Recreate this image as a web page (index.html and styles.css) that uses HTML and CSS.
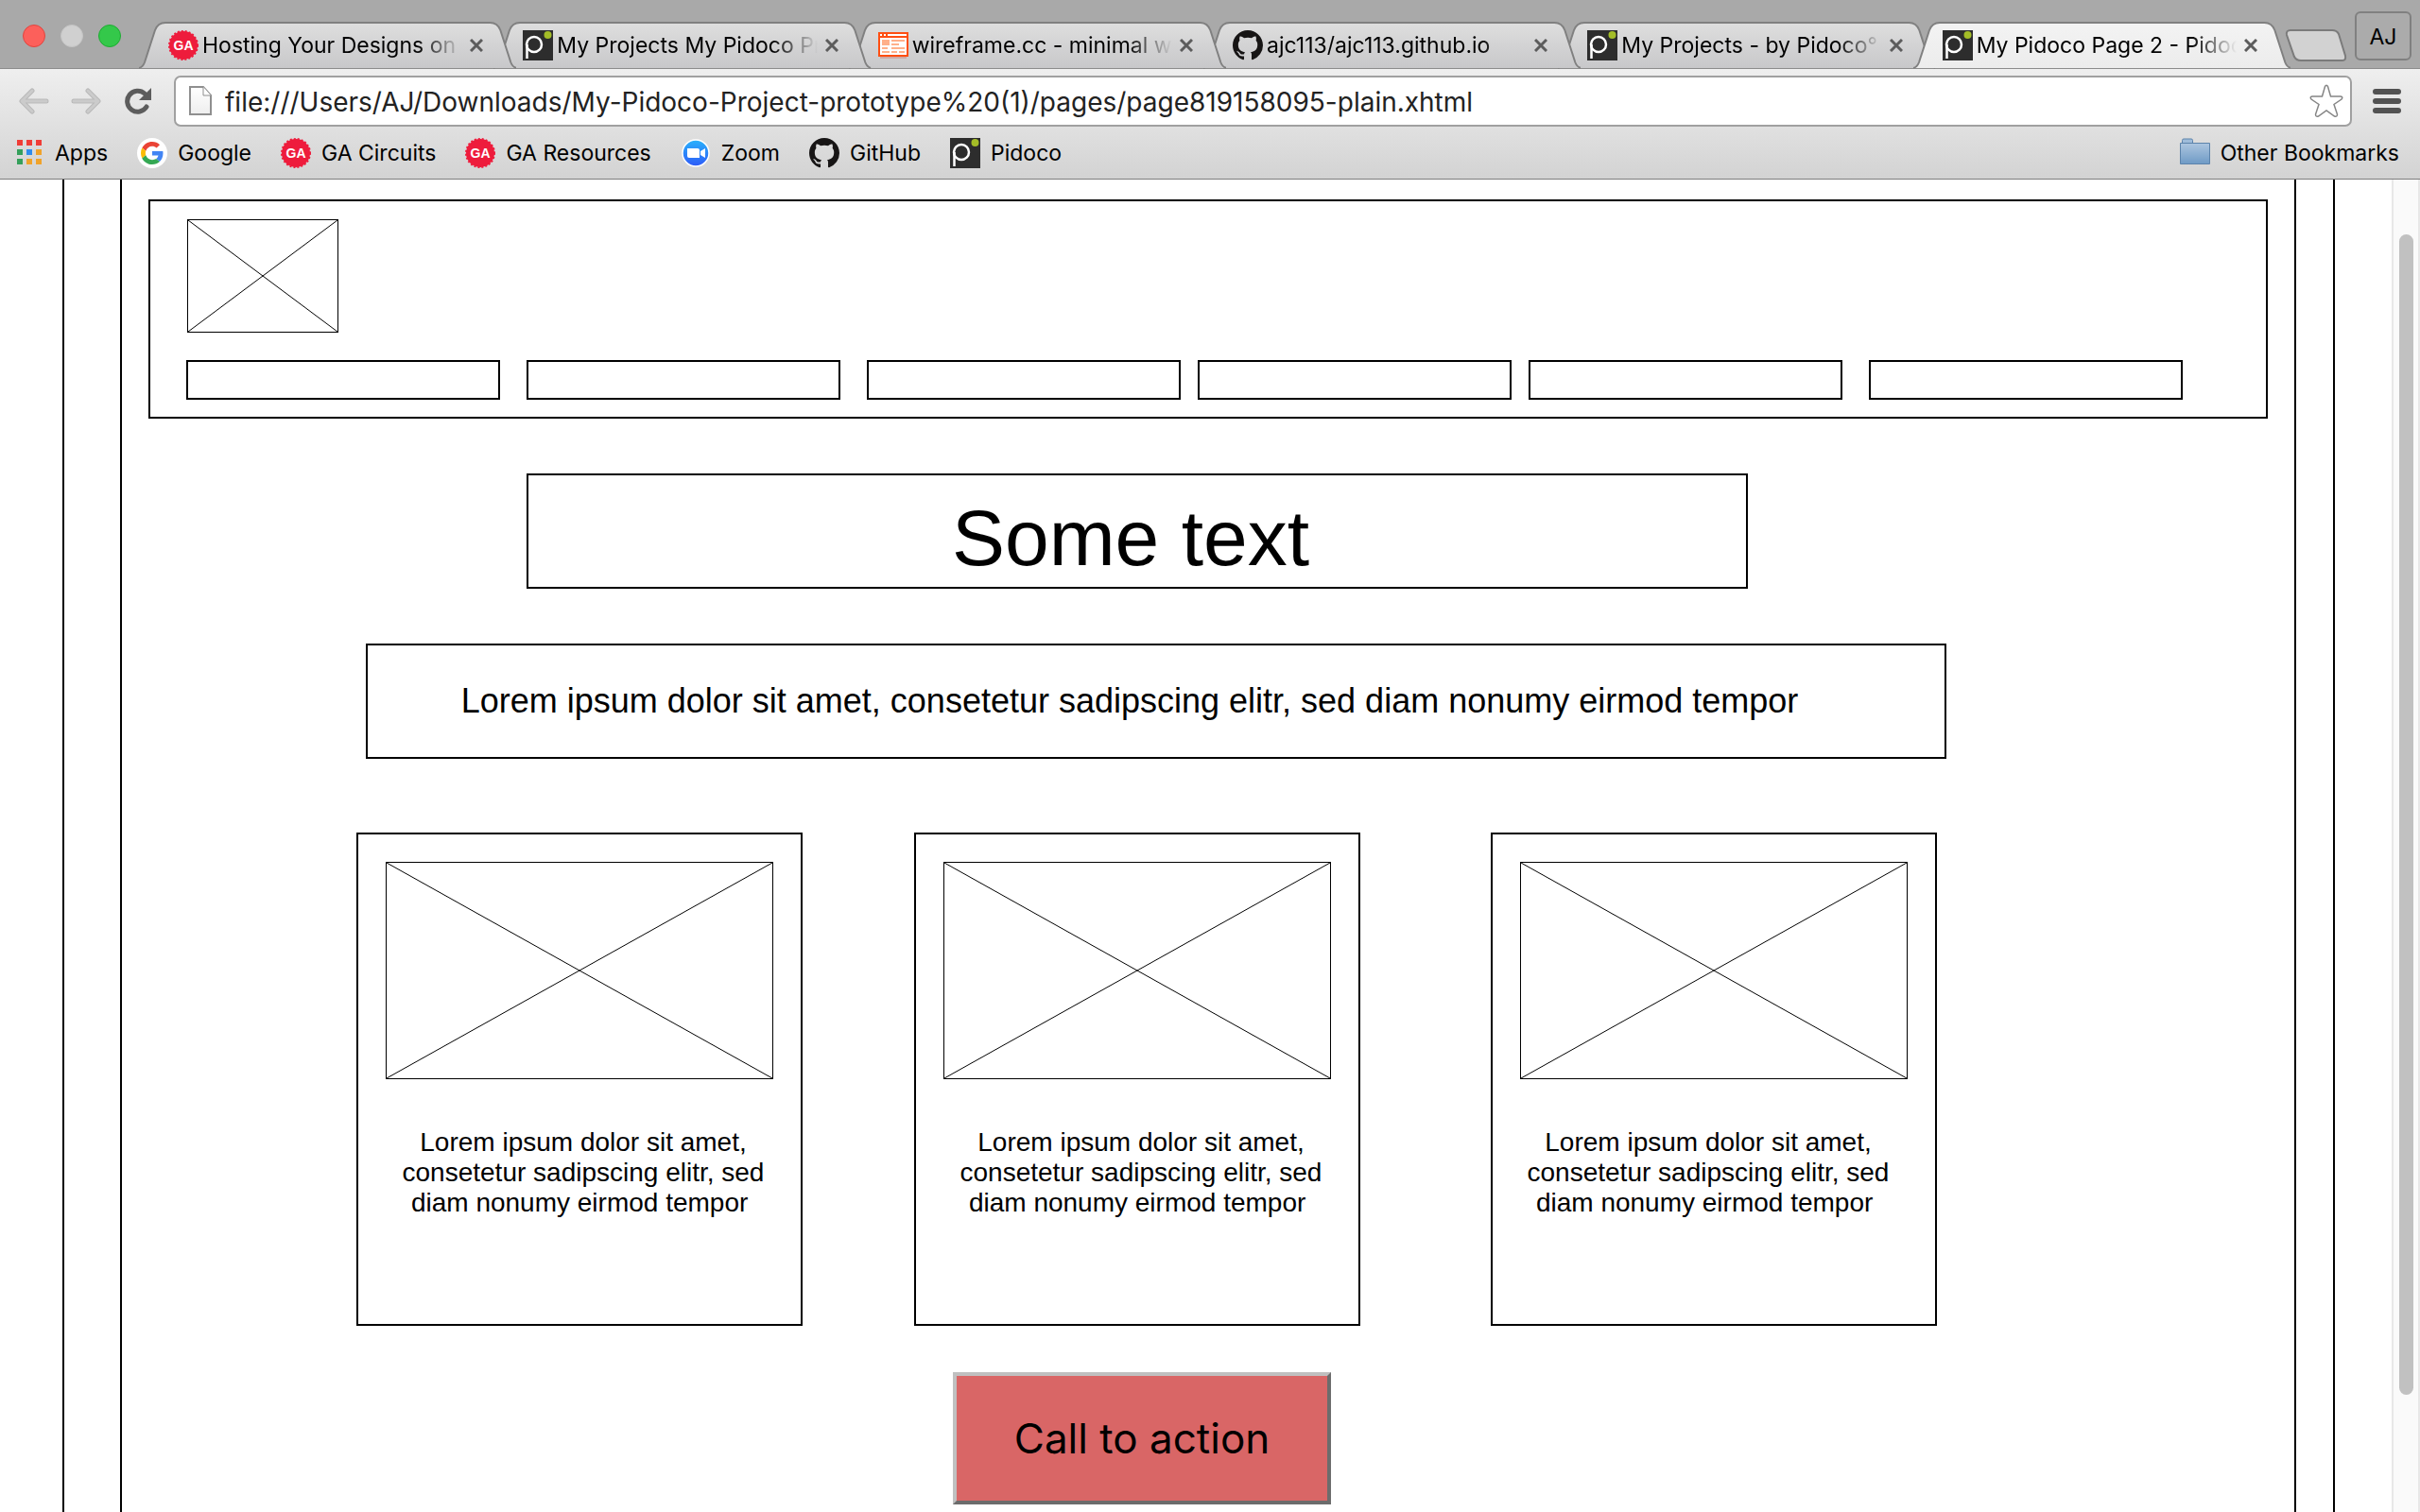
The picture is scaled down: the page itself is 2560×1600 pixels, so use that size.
FILE: index.html
```html
<!DOCTYPE html>
<html lang="en">
<head>
<meta charset="utf-8">
<meta name="viewport" content="width=device-width, initial-scale=1">
<title>My Pidoco Page 2 - Pidoco</title>
<link rel="stylesheet" href="styles.css">
</head>
<body>
<svg class="sprite" aria-hidden="true">
  <defs>
    <linearGradient id="tab-fill" x1="0" y1="0" x2="0" y2="1"><stop offset="0" stop-color="#dedede"/><stop offset="1" stop-color="#c8c8ca"/></linearGradient>
    <linearGradient id="tab-on" x1="0" y1="0" x2="0" y2="1"><stop offset="0" stop-color="#f3f3f3"/><stop offset="1" stop-color="#ececec"/></linearGradient>
    <linearGradient id="zoom-fill" x1="0" y1="0" x2="0" y2="1"><stop offset="0" stop-color="#29b2fb"/><stop offset="1" stop-color="#2e5bf8"/></linearGradient>
    <linearGradient id="folder-fill" x1="0" y1="0" x2="0" y2="1"><stop offset="0" stop-color="#adc6e0"/><stop offset="1" stop-color="#6e9ac5"/></linearGradient>
    <linearGradient id="page-fill" x1="0" y1="0" x2="0" y2="1"><stop offset="0" stop-color="#fff"/><stop offset="1" stop-color="#eee"/></linearGradient>
  </defs>
  <symbol id="tab" viewBox="0 0 400 50" preserveAspectRatio="none"><path d="M0 49Q4 48 6 43L17 9Q20 1 28 1H372Q380 1 383 9L394 43Q396 48 400 49"/></symbol>
  <symbol id="ga" viewBox="0 0 32 32"><circle cx="16" cy="16" r="15" fill="#ee1c3c"/><circle cx="16" cy="16" r="15" fill="none" stroke="#ee1c3c" stroke-width="2" stroke-dasharray="2 2"/></symbol>
  <symbol id="pidoco" viewBox="0 0 32 32"><path fill="#2d2d2d" d="M0 0h32v32H0z"/><circle cx="12" cy="15" r="8" fill="none" stroke="#fff" stroke-width="2.500"/><path d="M4.500 30V15" fill="none" stroke="#fff" stroke-width="2.500"/><circle cx="26.500" cy="5" r="4" fill="#a4bd27"/></symbol>
  <symbol id="github" viewBox="0 0 16 16"><path fill="#171515" d="M8 0C3.580 0 0 3.580 0 8c0 3.540 2.290 6.530 5.470 7.590.4.070.55-.17.55-.38 0-.19-.01-.82-.01-1.490-2.010.37-2.530-.49-2.690-.94-.09-.23-.48-.94-.82-1.130-.28-.15-.68-.52-.01-.53.63-.01 1.080.58 1.230.82.72 1.210 1.870.87 2.330.66.07-.52.28-.87.51-1.070-1.780-.2-3.640-.89-3.640-3.950 0-.87.31-1.590.82-2.150-.08-.2-.36-1.020.08-2.120 0 0 .67-.21 2.200.82.64-.18 1.320-.27 2-.27s1.360.09 2 .27c1.530-1.040 2.200-.82 2.200-.82.44 1.100.16 1.920.08 2.120.51.56.82 1.270.82 2.150 0 3.070-1.870 3.750-3.650 3.950.29.25.54.73.54 1.480 0 1.070-.01 1.930-.01 2.200 0 .21.15.46.55.38A8.010 8.010 0 0 0 16 8c0-4.420-3.580-8-8-8z"/></symbol>
  <symbol id="wire" viewBox="0 0 32 32"><path fill="#cfa9a4" d="M2 28h28v2H2z"/><path fill="#ff4f12" d="M0 2h32v26H0z"/><path fill="#fff" d="M2 8h28v18H2zM2 4h2v2H2zM6 4h2v2H6zM10 4h20v2H10z"/><path fill="#ffb08a" d="M4 10h8v6H4zM14 10h14v2H14zM14 14h8v2h-8zM4 18h6v2H4zM14 18h14v2H14zM4 22h8v2H4zM14 22h6v2h-6zM22 22h6v2h-6z"/></symbol>
  <symbol id="close" viewBox="0 0 14 14"><path d="M1 1l12 12M13 1L1 13" stroke="#5c5c5c" stroke-width="3"/></symbol>
</svg>

<header class="chrome">
  <div class="strip">
    <div class="lights">
      <button class="light red" aria-label="Close window"></button>
      <button class="light gray" aria-label="Minimize window"></button>
      <button class="light green" aria-label="Zoom window"></button>
    </div>
    <nav class="tabs" aria-label="Tabs">
      <div class="tab"><svg class="shape"><use href="#tab"/></svg><svg class="icon" viewBox="0 0 32 32"><use href="#ga"/><text x="16" y="21" text-anchor="middle" class="ga-text">GA</text></svg><span class="label">Hosting Your Designs on |</span><button class="close" aria-label="Close tab"><svg><use href="#close"/></svg></button></div>
      <div class="tab"><svg class="shape"><use href="#tab"/></svg><svg class="icon"><use href="#pidoco"/></svg><span class="label">My Projects My Pidoco Pro</span><button class="close" aria-label="Close tab"><svg><use href="#close"/></svg></button></div>
      <div class="tab"><svg class="shape"><use href="#tab"/></svg><svg class="icon"><use href="#wire"/></svg><span class="label">wireframe.cc - minimal wir</span><button class="close" aria-label="Close tab"><svg><use href="#close"/></svg></button></div>
      <div class="tab"><svg class="shape"><use href="#tab"/></svg><svg class="icon"><use href="#github"/></svg><span class="label">ajc113/ajc113.github.io</span><button class="close" aria-label="Close tab"><svg><use href="#close"/></svg></button></div>
      <div class="tab"><svg class="shape"><use href="#tab"/></svg><svg class="icon"><use href="#pidoco"/></svg><span class="label">My Projects - by Pidoco° P</span><button class="close" aria-label="Close tab"><svg><use href="#close"/></svg></button></div>
      <div class="tab on"><svg class="shape"><use href="#tab"/></svg><svg class="icon"><use href="#pidoco"/></svg><span class="label">My Pidoco Page 2 - Pidoc</span><button class="close" aria-label="Close tab"><svg><use href="#close"/></svg></button></div>
    </nav>
    <button class="new-tab" aria-label="New tab"><svg viewBox="0 0 66 34"><path d="M6 1H50Q55 1 57 5L64 28Q65 33 61 33H17Q12 33 10 29L2 6Q1 1 6 1Z" fill="#d2d2d2" stroke="#7b7b7b" stroke-width="2"/></svg></button>
    <button class="profile">AJ</button>
  </div>

  <div class="toolbar">
    <button class="tool" aria-label="Back"><svg viewBox="0 0 32 28"><path d="M14 3L3 14L14 25M4 14H29" fill="none" stroke="#b9b9b9" stroke-width="5" stroke-linecap="round" stroke-linejoin="round"/><path d="M14 3L3 14L14 25M4 14H29" fill="none" stroke="#cbcbcb" stroke-width="3" stroke-linecap="round" stroke-linejoin="round"/></svg></button>
    <button class="tool" aria-label="Forward"><svg viewBox="0 0 32 28"><path d="M18 3L29 14L18 25M28 14H3" fill="none" stroke="#b9b9b9" stroke-width="5" stroke-linecap="round" stroke-linejoin="round"/><path d="M18 3L29 14L18 25M28 14H3" fill="none" stroke="#cbcbcb" stroke-width="3" stroke-linecap="round" stroke-linejoin="round"/></svg></button>
    <button class="tool reload" aria-label="Reload"><svg viewBox="0 0 32 28"><path d="M25 20A11 11 0 1 1 23 6" fill="none" stroke="#5c5c5c" stroke-width="5" stroke-linecap="round"/><path d="M30 0V13H17Z" fill="#5c5c5c"/></svg></button>
    <div class="address">
      <svg class="page-icon" viewBox="0 0 24 32"><path d="M1 1H15L23 10V30H1Z" fill="url(#page-fill)" stroke="#8f8f8f" stroke-width="2"/><path d="M15 1V10H23" fill="#fff" stroke="#8f8f8f" stroke-width="1"/></svg>
      <input class="url" type="text" aria-label="Address" value="file:///Users/AJ/Downloads/My-Pidoco-Project-prototype%20(1)/pages/page819158095-plain.xhtml">
      <button class="star" aria-label="Bookmark this page"><svg viewBox="0 0 36 36"><path d="M16.500 2.500Q18 0 19.500 2.500L22.500 13H33Q36 13.500 34 16L26 21.500L29.500 32Q29.500 35 26.500 34L18 28L9.500 34Q6.500 35 6.500 32L10 21.500L2 16Q0 13.500 3 13H13.500Z" fill="#fff" stroke="#858585" stroke-width="1.500"/></svg></button>
    </div>
    <button class="menu" aria-label="Menu"><svg viewBox="0 0 30 28"><path d="M3 4H27M3 14H27M3 24H27" stroke="#525252" stroke-width="6" stroke-linecap="round"/></svg></button>
  </div>

  <nav class="bookmarks" aria-label="Bookmarks">
    <a class="mark" href="#"><svg class="icon" viewBox="0 0 32 32"><path fill="#f03d37" d="M3 2h6v6H3zM13 2h6v6h-6zM23 2h6v6h-6z"/><path fill="#35a05b" d="M3 12h6v6H3zM3 22h6v6H3z"/><path fill="#2f8cee" d="M13 12h6v6h-6z"/><path fill="#f0a32b" d="M23 12h6v6h-6zM13 22h6v6h-6zM23 22h6v6h-6z"/></svg>Apps</a>
    <a class="mark" href="#"><svg class="icon" viewBox="0 0 32 32"><circle cx="16" cy="16" r="16" fill="#fff"/><g transform="translate(4 4) scale(.5)"><path fill="#ea4335" d="M24 9.500c3.540 0 6.710 1.220 9.210 3.600l6.850-6.850C35.900 2.380 30.470 0 24 0 14.620 0 6.510 5.380 2.560 13.220l7.980 6.190C12.430 13.720 17.740 9.500 24 9.500z"/><path fill="#4285f4" d="M46.980 24.550c0-1.570-.15-3.090-.38-4.550H24v9.020h12.940c-.58 2.960-2.260 5.480-4.780 7.180l7.730 6c4.510-4.180 7.090-10.360 7.090-17.650z"/><path fill="#fbbc05" d="M10.530 28.590c-.48-1.450-.76-2.990-.76-4.590s.27-3.140.76-4.590l-7.980-6.190C.92 16.460 0 20.120 0 24c0 3.880.92 7.540 2.560 10.780l7.970-6.190z"/><path fill="#34a853" d="M24 48c6.480 0 11.930-2.130 15.890-5.810l-7.730-6c-2.150 1.450-4.920 2.300-8.160 2.300-6.260 0-11.570-4.220-13.470-9.910l-7.980 6.190C6.510 42.620 14.620 48 24 48z"/></g></svg>Google</a>
    <a class="mark" href="#"><svg class="icon" viewBox="0 0 32 32"><use href="#ga"/><text x="16" y="21" text-anchor="middle" class="ga-text">GA</text></svg>GA Circuits</a>
    <a class="mark" href="#"><svg class="icon" viewBox="0 0 32 32"><use href="#ga"/><text x="16" y="21" text-anchor="middle" class="ga-text">GA</text></svg>GA Resources</a>
    <a class="mark" href="#"><svg class="icon" viewBox="0 0 32 32"><circle cx="16" cy="16" r="14" fill="url(#zoom-fill)" stroke="#fff" stroke-width="1.500"/><path fill="#fff" d="M7 11h11q2 0 2 2v8H9q-2 0-2-2zM21 14l5-3v10l-5-3z"/></svg>Zoom</a>
    <a class="mark" href="#"><svg class="icon"><use href="#github"/></svg>GitHub</a>
    <a class="mark" href="#"><svg class="icon"><use href="#pidoco"/></svg>Pidoco</a>
    <a class="mark other" href="#"><svg class="icon" viewBox="0 0 32 32"><path d="M2.500 6V2.500Q2.500 1 4 1H12Q13.500 1 13.500 2.500V6" fill="#9fbcda" stroke="#5c83ab"/><path d="M.5 5.500H31.500V27.500H.5Z" fill="url(#folder-fill)" stroke="#5c83ab"/></svg>Other Bookmarks</a>
  </nav>
</header>

<div class="viewport">
  <main class="outer">
    <div class="inner">
      <header class="site-head">
        <svg class="logo cross" role="img" aria-label="Logo"><line x1="0" y1="0" x2="100%" y2="100%"/><line x1="100%" y1="0" x2="0" y2="100%"/></svg>
        <nav class="site-nav" aria-label="Site">
          <a href="#" aria-label="Link 1"></a>
          <a href="#" aria-label="Link 2" class="wide"></a>
          <a href="#" aria-label="Link 3" class="wide"></a>
          <a href="#" aria-label="Link 4"></a>
          <a href="#" aria-label="Link 5"></a>
          <a href="#" aria-label="Link 6" class="wide"></a>
        </nav>
      </header>
      <h1 class="title">Some text</h1>
      <p class="lead">Lorem ipsum dolor sit amet, consetetur sadipscing elitr, sed diam nonumy eirmod tempor</p>
      <section class="cards">
        <article class="card"><svg class="photo cross" role="img" aria-label="Image"><line x1="0" y1="0" x2="100%" y2="100%"/><line x1="100%" y1="0" x2="0" y2="100%"/></svg><p>Lorem ipsum dolor sit amet, consetetur sadipscing elitr, sed diam nonumy eirmod tempor&nbsp;</p></article>
        <article class="card"><svg class="photo cross" role="img" aria-label="Image"><line x1="0" y1="0" x2="100%" y2="100%"/><line x1="100%" y1="0" x2="0" y2="100%"/></svg><p>Lorem ipsum dolor sit amet, consetetur sadipscing elitr, sed diam nonumy eirmod tempor&nbsp;</p></article>
        <article class="card last"><svg class="photo cross" role="img" aria-label="Image"><line x1="0" y1="0" x2="100%" y2="100%"/><line x1="100%" y1="0" x2="0" y2="100%"/></svg><p>Lorem ipsum dolor sit amet, consetetur sadipscing elitr, sed diam nonumy eirmod tempor&nbsp;</p></article>
      </section>
      <button class="cta">Call to action</button>
    </div>
  </main>
  <div class="scrollbar"><div class="thumb"></div></div>
</div>
</body>
</html>
```
FILE: styles.css
```css
* { box-sizing: border-box; }

html, body { margin: 0; height: 100%; }

body {
  display: flex;
  flex-direction: column;
  overflow: hidden;
  background: #fff;
  color: #000;
  font-family: "Liberation Sans", Arial, sans-serif;
}

button {
  padding: 0;
  border: 0;
  background: none;
  color: inherit;
  font: inherit;
}

svg { display: block; }

.sprite { position: absolute; width: 0; height: 0; }

/* Browser chrome */
.chrome {
  flex: none;
  border-bottom: 1px solid #7d7d7d;
  background: linear-gradient(#efefef 72px, #d3d3d3);
  font-family: Inter, "Noto Sans", sans-serif;
  font-size: 23px;
}

.strip {
  display: flex;
  height: 73px;
  border-bottom: 1px solid #8c8c8c;
  background: #a9a9a9;
}

.lights {
  display: flex;
  flex: none;
  align-items: center;
  gap: 16px;
  width: 147px;
  padding: 4px 0 0 24px;
}

.light {
  width: 24px;
  height: 24px;
  border: 1px solid;
  border-radius: 50%;
}

.red { border-color: #e0443e; background: #fc605b; }
.gray { border-color: #c4c4c4; background: #d0d0d0; }
.green { border-color: #1eab32; background: #34c84a; }

.tabs {
  display: flex;
  flex: 0 1 2276px;
  min-width: 0;
  margin-bottom: -1px;
  padding-top: 23px;
}

.tab {
  position: relative;
  display: flex;
  flex: 1 1 0;
  align-items: center;
  min-width: 0;
  margin-right: -24px;
  padding: 0 35px 0 31px;
}

.tab:last-child { margin-right: 0; }
.tab:nth-child(1) { z-index: 5; }
.tab:nth-child(2) { z-index: 4; }
.tab:nth-child(3) { z-index: 3; }
.tab:nth-child(4) { z-index: 2; }
.tab:nth-child(5) { z-index: 1; }
.tab.on { z-index: 6; }

.shape {
  position: absolute;
  inset: 0;
  z-index: -1;
  width: 100%;
  height: 100%;
  fill: url(#tab-fill);
  stroke: #808080;
  stroke-width: 2px;
}

.on .shape { fill: url(#tab-on); }

.icon { flex: none; width: 32px; height: 32px; }

.ga-text {
  fill: #fff;
  font: bold 14px "Liberation Sans", Arial, sans-serif;
}

.label {
  flex: 1;
  min-width: 0;
  margin: 0 8px 0 4px;
  overflow: hidden;
  line-height: 32px;
  white-space: nowrap;
  mask-image: linear-gradient(to left, transparent, #000 48px);
}

.close svg { width: 14px; height: 14px; }

.new-tab { flex: none; align-self: flex-start; margin: 31px 0 0 -6px; }
.new-tab svg { width: 66px; height: 34px; }

.profile {
  width: 60px;
  height: 52px;
  margin: 12px 9px 0 auto;
  padding-top: 2px;
  border: 2px solid #808080;
  border-radius: 6px;
  background: #ababab;
}

.toolbar {
  display: flex;
  align-items: center;
  height: 68px;
  padding: 0 20px;
}

.tool { margin-right: 23px; }
.tool svg { width: 32px; height: 28px; }
.reload { margin-right: 22px; }

.address {
  display: flex;
  flex: 1;
  align-items: center;
  height: 54px;
  padding: 0 7px 0 14px;
  border: 2px solid #a0a0a0;
  border-radius: 7px;
  background: #fff;
}

.page-icon { flex: none; width: 24px; height: 32px; }

.url {
  flex: 1;
  min-width: 0;
  margin-left: 14px;
  padding: 2px 0 0;
  border: 0;
  outline: 0;
  background: none;
  color: #222;
  font: 28px/36px Inter, "Noto Sans", sans-serif;
}

.star svg { width: 36px; height: 36px; }

.menu { margin-left: 22px; }
.menu svg { width: 30px; height: 28px; }

.bookmarks {
  display: flex;
  align-items: center;
  gap: 31px;
  height: 48px;
  padding: 0 22px 6px 15px;
}

.mark {
  display: flex;
  flex: none;
  align-items: center;
  gap: 11px;
  color: #000;
  line-height: 32px;
  text-decoration: none;
}

.other { margin-left: auto; }

/* Wireframe page */
.viewport {
  display: flex;
  flex: 1;
  min-height: 0;
  overflow: hidden;
}

.outer {
  flex: 1;
  min-width: 0;
  height: max-content;
  min-height: 100%;
  margin: 0 60px 0 66px;
  padding: 0 39px 0 59px;
  border: solid #000;
  border-width: 0 2px;
}

.inner {
  display: flex;
  flex-direction: column;
  min-height: 1420px;
  padding-top: 21px;
  border: solid #000;
  border-width: 0 2px;
}

.site-head {
  margin: 0 28px;
  padding: 19px 88px 18px 38px;
  border: 2px solid #000;
}

.cross { border: 1px solid #000; stroke: #000; stroke-width: 1px; }

.logo { width: 160px; height: 120px; margin-left: 1px; }

.site-nav {
  display: flex;
  gap: 18px;
  margin-top: 29px;
}

.site-nav a { flex: 1; height: 42px; border: 2px solid #000; }
.site-nav .wide { margin-left: 10px; }

.title {
  height: 122px;
  margin: 58px 578px 0 428px;
  padding: 18px 14px 0 0;
  border: 2px solid #000;
  font-size: 84px;
  font-weight: normal;
  line-height: 96px;
  text-align: center;
}

.lead {
  height: 122px;
  margin: 58px 368px 0 258px;
  padding: 38px 56px 0 0;
  border: 2px solid #000;
  font-size: 36px;
  line-height: 42px;
  text-align: center;
}

.cards {
  display: flex;
  gap: 118px;
  margin: 78px 378px 0 248px;
}

.card {
  flex: 1;
  height: 522px;
  padding: 29px;
  border: 2px solid #000;
}

.last { margin-left: 20px; }

.photo { width: 100%; height: 230px; }

.card p {
  margin: 51px 0 0;
  padding-left: 8px;
  font-size: 28px;
  line-height: 32px;
  text-align: center;
}

.last p { padding: 0 12px 0 0; }

.cta {
  width: 400px;
  height: 140px;
  margin: 49px 0 0 879px;
  border: 4px solid;
  border-color: #c0c0c0 #6c6c6c #6c6c6c #c0c0c0;
  background: #d96666;
  font: 44px/56px Inter, "Noto Sans", sans-serif;
}

.scrollbar {
  flex: none;
  width: 30px;
  padding: 58px 5px 0 6px;
  border: solid #e8e8e8;
  border-width: 0 2px;
  background: #fafafa;
}

.thumb { height: 1228px; border-radius: 8px; background: #c1c1c1; }
```
